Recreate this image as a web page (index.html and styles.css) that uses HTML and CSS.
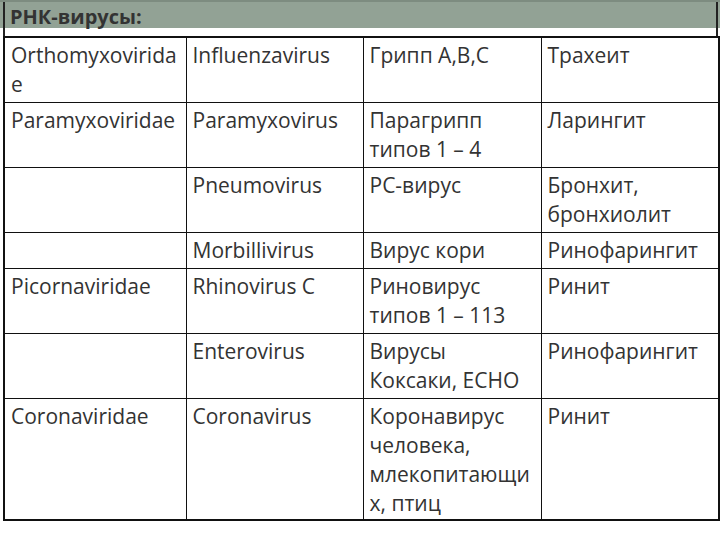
FILE: index.html
```html
<!DOCTYPE html>
<html lang="ru">
<head>
<meta charset="utf-8">
<link rel="stylesheet" href="styles.css">
</head>
<body>
<div class="top">
  <div class="top-in"><span class="title">РНК-вирусы:</span></div>
</div>
<div class="frame">
  <div class="gap"></div>
  <table class="grid">
    <colgroup>
      <col class="c1"><col class="c2"><col class="c3"><col class="c4">
    </colgroup>
    <tr class="r2">
      <td>Orthomyxovirida<br>e</td><td>Influenzavirus</td><td>Грипп А,В,С</td><td>Трахеит</td>
    </tr>
    <tr class="r2">
      <td>Paramyxoviridae</td><td>Paramyxovirus</td><td>Парагрипп<br>типов 1 – 4</td><td>Ларингит</td>
    </tr>
    <tr class="r2">
      <td></td><td>Pneumovirus</td><td>РС-вирус</td><td>Бронхит,<br>бронхиолит</td>
    </tr>
    <tr class="r1">
      <td></td><td>Morbillivirus</td><td>Вирус кори</td><td>Ринофарингит</td>
    </tr>
    <tr class="r2">
      <td>Picornaviridae</td><td>Rhinovirus C</td><td>Риновирус<br>типов 1 – 113</td><td>Ринит</td>
    </tr>
    <tr class="r2">
      <td></td><td>Enterovirus</td><td>Вирусы<br>Коксаки, ЕСНО</td><td>Ринофарингит</td>
    </tr>
    <tr class="r4">
      <td>Coronaviridae</td><td>Coronavirus</td><td>Коронавирус<br>человека,<br>млекопитающи<br>х, птиц</td><td>Ринит</td>
    </tr>
  </table>
</div>
</body>
</html>
```
FILE: styles.css
```css
html, body {
  margin: 0;
  padding: 0;
  background: #ffffff;
}
body {
  width: 720px;
  height: 540px;
  overflow: hidden;
  font-family: "Open Sans", "Noto Sans", sans-serif;
  color: #333333;
}
.top {
  background: #92a295;
  border-top: 2px solid #7d8c80;
  padding: 0 2px 0 3px;
}
.top-in {
  height: 26px;
  padding: 3px 0 0 5px;
  border-left: 2px solid #222;
  border-right: 2px solid #222;
  box-sizing: border-box;
}
.title {
  display: block;
  font-weight: 700;
  font-size: 20px;
  line-height: 23px;
  color: #333;
}
.frame {
  margin: 0 2px 0 3px;
}
.gap {
  height: 8px;
  border-left: 2px solid #222;
  border-right: 2px solid #222;
  box-sizing: border-box;
}
.grid {
  width: 715px;
  border-collapse: collapse;
  table-layout: fixed;
  border: 2px solid #111;
}
.c1 { width: 182px; }
.c2 { width: 177px; }
.c3 { width: 178px; }
.c4 { width: 178px; }
.grid td {
  border: 1px solid #111;
  vertical-align: top;
  padding: 3px 4px 0 6px;
  font-size: 21px;
  line-height: 29px;
  white-space: nowrap;
  overflow: hidden;
}
.r1 { height: 36px; }
.r2 { height: 65px; }
.r4 { height: 122px; }
```
